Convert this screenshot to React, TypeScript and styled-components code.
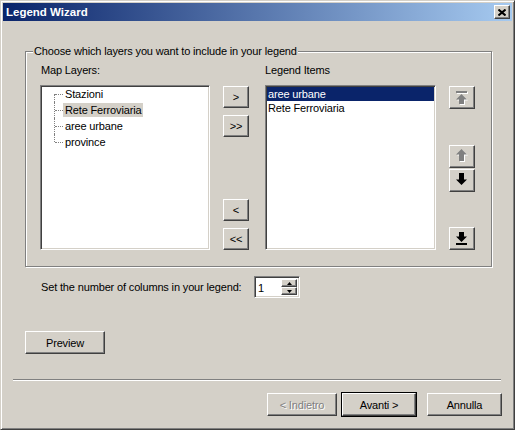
import React from "react";
import styled, { createGlobalStyle, css } from "styled-components";

const Global = createGlobalStyle`
  html, body { margin: 0; padding: 0; background: #d4d0c8; }
  body { font-family: "Liberation Sans", Arial, sans-serif; font-size: 11px; letter-spacing: -0.15px; color: #000; }
  * { box-sizing: border-box; }
`;

const raised = css`
  background: #d4d0c8;
  border: 1px solid;
  border-color: #fff #404040 #404040 #fff;
  box-shadow: inset -1px -1px 0 #808080, inset 1px 1px 0 #d4d0c8;
`;

const sunken = css`
  background: #fff;
  border: 1px solid;
  border-color: #808080 #fff #fff #808080;
  box-shadow: inset 1px 1px 0 #404040, inset -1px -1px 0 #d4d0c8;
`;

const Window = styled.div`
  width: 515px;
  height: 430px;
  display: flex;
  flex-direction: column;
  background: #d4d0c8;
  border: 1px solid;
  border-color: #d4d0c8 #404040 #404040 #d4d0c8;
  box-shadow: inset 1px 1px 0 #fff, inset -1px -1px 0 #808080;
  padding: 2px;
`;

const TitleBar = styled.div`
  height: 18px;
  flex: none;
  display: flex;
  align-items: center;
  justify-content: space-between;
  padding: 0 2px 0 3px;
  background: linear-gradient(to right, #0a246a, #a6caf0);
`;

const TitleText = styled.span`
  color: #fff;
  font-weight: bold;
  font-size: 11.5px;
  letter-spacing: 0;
  line-height: 18px;
`;

const CloseButton = styled.div`
  ${raised};
  width: 16px;
  height: 14px;
  display: flex;
  align-items: center;
  justify-content: center;
`;

const Body = styled.div`
  flex: 1;
  display: flex;
  flex-direction: column;
`;

const Group = styled.fieldset`
  margin: 24px 20px 0 22px;
  padding: 0;
  border: 1px solid #808080;
  box-shadow: inset 1px 1px 0 #fff, 1px 1px 0 #fff;
  min-width: 0;
`;

const GroupLegend = styled.legend`
  margin-left: 7px;
  padding: 0 1px;
  line-height: 13px;
  background: #d4d0c8;
`;

const GroupInner = styled.div`
  padding: 5px 0 16px 14px;
`;

const Columns = styled.div`
  display: grid;
  grid-template-columns: 170px 26px 174px 26px;
  grid-template-rows: auto 165px;
  column-gap: 13px;
  row-gap: 8px;
`;

const ColLabel = styled.div<{ $indent?: number }>`
  line-height: 14px;
  padding-left: ${(p) => p.$indent ?? 1}px;
`;

const TreeBox = styled.div`
  ${sunken};
  padding: 0 1px;
`;

const TreeRow = styled.div`
  height: 16px;
  display: flex;
  align-items: stretch;
  padding-left: 12px;
`;

const Connector = styled.div<{ $first?: boolean; $last?: boolean }>`
  position: relative;
  width: 9px;
  flex: none;
  &::before {
    content: "";
    position: absolute;
    left: 0;
    width: 0;
    border-left: 1px dotted #808080;
    top: ${(p) => (p.$first ? "8px" : "0")};
    bottom: ${(p) => (p.$last ? "8px" : "0")};
  }
  &::after {
    content: "";
    position: absolute;
    left: 1px;
    right: 0;
    top: 8px;
    border-top: 1px dotted #808080;
  }
`;

const TreeLabel = styled.span<{ $selected?: boolean }>`
  margin-top: 1px;
  height: 14px;
  line-height: 14px;
  padding: 0 2px;
  background: ${(p) => (p.$selected ? "#d4d0c8" : "transparent")};
  white-space: nowrap;
`;

const ListBox = styled.div`
  ${sunken};
  width: 171px;
  justify-self: end;
  padding: 1px;
`;

const ListItem = styled.div<{ $selected?: boolean }>`
  height: 14px;
  line-height: 14px;
  padding-left: 1px;
  background: ${(p) => (p.$selected ? "#0a246a" : "transparent")};
  color: ${(p) => (p.$selected ? "#fff" : "#000")};
`;

const ButtonColumn = styled.div`
  display: flex;
  flex-direction: column;
  justify-content: space-between;
  padding: 1px 0 0;
`;

const ButtonGroup = styled.div<{ $gap: number }>`
  display: flex;
  flex-direction: column;
  gap: ${(p) => p.$gap}px;
`;

const SmallButton = styled.div<{ $h?: number }>`
  ${raised};
  width: 26px;
  height: ${(p) => p.$h ?? 22}px;
  display: flex;
  align-items: center;
  justify-content: center;
  line-height: 1;
  font-size: 11px;
`;

const SpinRow = styled.div`
  display: grid;
  grid-template-columns: 213px 46px;
  align-items: center;
  margin: 9px 0 0 38px;
`;

const Spinner = styled.div`
  ${sunken};
  height: 22px;
  display: flex;
  padding: 2px 2px 2px 3px;
`;

const SpinValue = styled.div`
  flex: 1;
  line-height: 18px;
`;

const SpinButtons = styled.div`
  display: flex;
  flex-direction: column;
  width: 16px;
`;

const SpinButton = styled.div`
  ${raised};
  flex: 1;
  display: flex;
  align-items: center;
  justify-content: center;
`;

const PushButton = styled.div<{ $w: number; $disabled?: boolean; $default?: boolean }>`
  ${raised};
  width: ${(p) => p.$w}px;
  height: 23px;
  display: flex;
  align-items: center;
  justify-content: center;
  color: ${(p) => (p.$disabled ? "#808080" : "#000")};
  text-shadow: ${(p) => (p.$disabled ? "1px 1px 0 #fff" : "none")};
  ${(p) =>
    p.$default &&
    css`
      outline: 1px solid #000;
    `}
`;

const PreviewWrap = styled.div`
  margin: 33px 0 0 22px;
`;

const Separator = styled.div`
  margin: 25px 11px 0 10px;
  height: 2px;
  border-top: 1px solid #808080;
  border-bottom: 1px solid #fff;
`;

const Footer = styled.div`
  display: flex;
  justify-content: flex-end;
  align-items: center;
  margin: 12px 10px 0 0;
`;

const Spacer = styled.div<{ $w: number }>`
  width: ${(p) => p.$w}px;
  flex: none;
`;

type Dir = "top" | "up" | "down" | "bottom";

const arrowShapes: Record<Dir, React.ReactNode> = {
  top: (
    <>
      <rect x={0} y={0} width={11} height={2} />
      <polygon points="5.5,3 11,8.5 8,8.5 8,13 3,13 3,8.5 0,8.5" />
    </>
  ),
  up: <polygon points="5.5,0 11,5.5 8,5.5 8,12 3,12 3,5.5 0,5.5" />,
  down: <polygon points="3,0 8,0 8,6.5 11,6.5 5.5,12 0,6.5 3,6.5" />,
  bottom: (
    <>
      <polygon points="3,0 8,0 8,4.5 11,4.5 5.5,10 0,4.5 3,4.5" />
      <rect x={0} y={11} width={11} height={2} />
    </>
  ),
};

const ArrowIcon = ({ dir, disabled }: { dir: Dir; disabled?: boolean }) => (
  <svg width={12} height={14} viewBox="0 0 12 14">
    {disabled ? (
      <>
        <g fill="#fff" transform="translate(1,1)">
          {arrowShapes[dir]}
        </g>
        <g fill="#808080">{arrowShapes[dir]}</g>
      </>
    ) : (
      <g fill="#000">{arrowShapes[dir]}</g>
    )}
  </svg>
);

const Tri = ({ up }: { up?: boolean }) => (
  <svg width={5} height={3} viewBox="0 0 5 3">
    <polygon points={up ? "2.5,0 5,3 0,3" : "0,0 5,0 2.5,3"} fill="#000" />
  </svg>
);

const layers = ["Stazioni", "Rete Ferroviaria", "aree urbane", "province"];

export default function App() {
  return (
    <>
      <Global />
      <Window>
        <TitleBar>
          <TitleText>Legend Wizard</TitleText>
          <CloseButton>
            <svg width={8} height={7} viewBox="0 0 8 7">
              <path d="M0.5 0.5 L7.5 6.5 M7.5 0.5 L0.5 6.5" stroke="#000" strokeWidth={2} />
            </svg>
          </CloseButton>
        </TitleBar>
        <Body>
          <Group>
            <GroupLegend>Choose which layers you want to include in your legend</GroupLegend>
            <GroupInner>
              <Columns>
                <ColLabel>Map Layers:</ColLabel>
                <div />
                <ColLabel $indent={3}>Legend Items</ColLabel>
                <div />
                <TreeBox>
                  {layers.map((l, i) => (
                    <TreeRow key={l}>
                      <Connector $first={i === 0} $last={i === layers.length - 1} />
                      <TreeLabel $selected={i === 1}>{l}</TreeLabel>
                    </TreeRow>
                  ))}
                </TreeBox>
                <ButtonColumn>
                  <ButtonGroup $gap={7}>
                    <SmallButton>&gt;</SmallButton>
                    <SmallButton>&gt;&gt;</SmallButton>
                  </ButtonGroup>
                  <ButtonGroup $gap={7}>
                    <SmallButton>&lt;</SmallButton>
                    <SmallButton>&lt;&lt;</SmallButton>
                  </ButtonGroup>
                </ButtonColumn>
                <ListBox>
                  <ListItem $selected>aree urbane</ListItem>
                  <ListItem>Rete Ferroviaria</ListItem>
                </ListBox>
                <ButtonColumn>
                  <SmallButton $h={23}>
                    <ArrowIcon dir="top" disabled />
                  </SmallButton>
                  <ButtonGroup $gap={1}>
                    <SmallButton $h={23}>
                      <ArrowIcon dir="up" disabled />
                    </SmallButton>
                    <SmallButton $h={23}>
                      <ArrowIcon dir="down" />
                    </SmallButton>
                  </ButtonGroup>
                  <SmallButton $h={23}>
                    <ArrowIcon dir="bottom" />
                  </SmallButton>
                </ButtonColumn>
              </Columns>
            </GroupInner>
          </Group>
          <SpinRow>
            <span>Set the number of columns in your legend:</span>
            <Spinner>
              <SpinValue>1</SpinValue>
              <SpinButtons>
                <SpinButton>
                  <Tri up />
                </SpinButton>
                <SpinButton>
                  <Tri />
                </SpinButton>
              </SpinButtons>
            </Spinner>
          </SpinRow>
          <PreviewWrap>
            <PushButton $w={80}>Preview</PushButton>
          </PreviewWrap>
          <Separator />
          <Footer>
            <PushButton $w={70} $disabled>
              &lt; Indietro
            </PushButton>
            <Spacer $w={5} />
            <PushButton $w={74} $default>
              Avanti &gt;
            </PushButton>
            <Spacer $w={11} />
            <PushButton $w={75}>Annulla</PushButton>
          </Footer>
        </Body>
      </Window>
    </>
  );
}
